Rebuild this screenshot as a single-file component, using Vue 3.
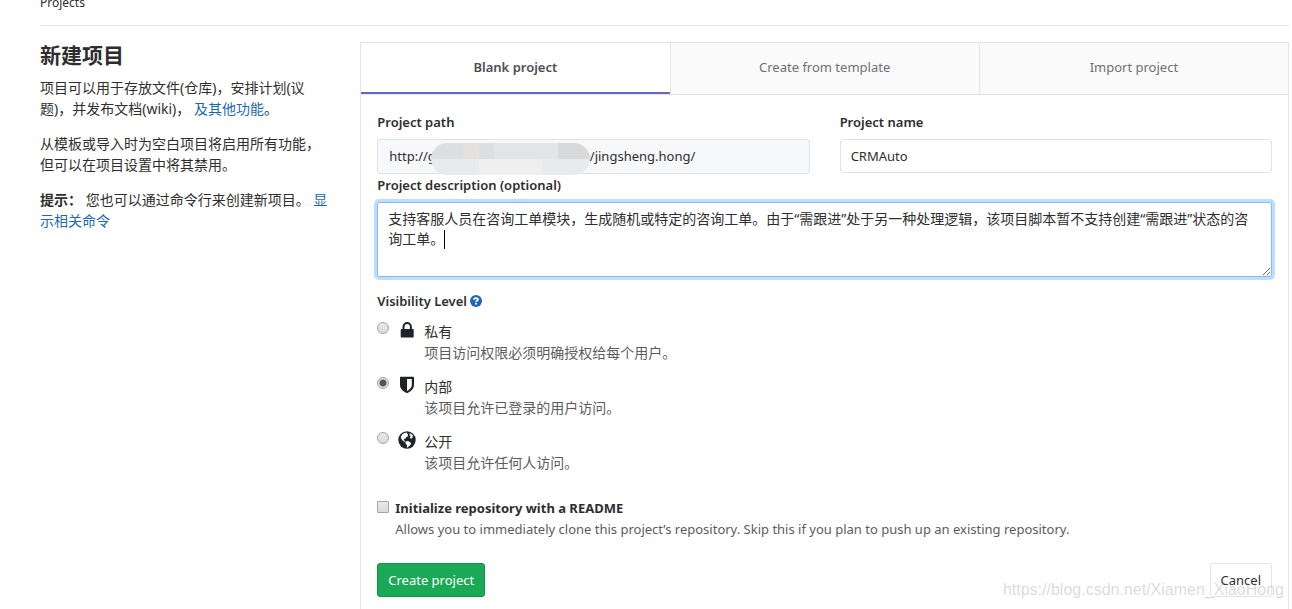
<script setup>
import { ref } from 'vue'

const tabs = ['Blank project', 'Create from template', 'Import project']
const activeTab = ref(0)
const projectName = ref('CRMAuto')
const description = ref(
  '支持客服人员在咨询工单模块，生成随机或特定的咨询工单。由于“需跟进”处于另一种处理逻辑，该项目脚本暂不支持创建“需跟进”状态的咨询工单。'
)
const visibility = ref('internal')
const withReadme = ref(false)
const levels = [
  { id: 'private', name: '私有', note: '项目访问权限必须明确授权给每个用户。' },
  { id: 'internal', name: '内部', note: '该项目允许已登录的用户访问。' },
  { id: 'public', name: '公开', note: '该项目允许任何人访问。' }
]
</script>

<template>
  <div class="page">
    <nav class="crumbs"><a href="#">Projects</a></nav>
    <div class="row">
      <aside class="intro">
        <h1>新建项目</h1>
        <p>项目可以用于存放文件(仓库)，安排计划(议题)，并发布文档(wiki)， <a href="#">及其他功能</a>。</p>
        <p>从模板或导入时为空白项目将启用所有功能，但可以在项目设置中将其禁用。</p>
        <p><strong>提示：</strong> 您也可以通过命令行来创建新项目。 <a href="#">显示相关命令</a></p>
      </aside>

      <main class="panel">
        <div class="tabs" role="tablist">
          <button
            v-for="(tab, i) in tabs"
            :key="tab"
            type="button"
            role="tab"
            class="tab"
            :class="{ active: activeTab === i }"
            :aria-selected="activeTab === i"
            @click="activeTab = i"
          >{{ tab }}</button>
        </div>

        <form class="form" @submit.prevent>
          <div class="pair">
            <div class="field">
              <span class="label">Project path</span>
              <div class="path">
                <span>http://g</span>
                <span class="mask" aria-hidden="true"><i v-for="n in 20" :key="n"></i></span>
                <span>/jingsheng.hong/</span>
              </div>
            </div>
            <div class="field">
              <label class="label" for="name">Project name</label>
              <input id="name" v-model="projectName" class="text" type="text">
            </div>
          </div>

          <label class="label" for="desc">Project description (optional)</label>
          <div class="area">
            <textarea id="desc" v-model="description" rows="3" spellcheck="false"></textarea>
            <span class="caret"></span>
          </div>

          <fieldset class="levels">
            <legend class="label">
              Visibility Level
              <a href="#" class="help" aria-label="Help">
                <svg viewBox="0 0 12 12" width="12" height="12">
                  <circle cx="6" cy="6" r="6" fill="#1b69b6" />
                  <path d="M4 4.7C4 2.6 8 2.5 8 4.6C8 5.7 6.1 5.7 6.1 7" fill="none" stroke="#fff" stroke-width="1.8" />
                  <rect x="5.1" y="7.9" width="1.9" height="1.7" fill="#fff" />
                </svg>
              </a>
            </legend>
            <div v-for="level in levels" :key="level.id" class="level">
              <input :id="level.id" v-model="visibility" class="radio" type="radio" name="visibility" :value="level.id">
              <label :for="level.id">
                <svg v-if="level.id === 'private'" class="icon" viewBox="0 0 18 18" width="18" height="18">
                  <path d="M5.5 9V5.8a3.7 3.7 0 0 1 7.4 0V9" fill="none" stroke="#1f2226" stroke-width="2" />
                  <rect x="2.700" y="8" width="13" height="8.5" rx="1" fill="#1f2226" />
                </svg>
                <svg v-else-if="level.id === 'internal'" class="icon" viewBox="0 0 18 18" width="18" height="18">
                  <path fill-rule="evenodd" d="M2 1.5a.7.7 0 0 1 .7-.7h12.6a.7.7 0 0 1 .7.7V9c0 3.8-3.4 6.5-7 8.3C5.4 15.5 2 12.8 2 9zM9 3v11.9c2.800-1.600 4.800-3.500 4.800-6V3z" fill="#1f2226" />
                </svg>
                <svg v-else class="icon" viewBox="0 0 18 18" width="18" height="18">
                  <circle cx="9" cy="9" r="8.7" fill="#1f2226" />
                  <path d="M4.300 3.300L6.500 1.900L9.200 1.500L8.800 2.800L10.200 3.100L9.600 4.400L10.300 5.200L8.200 6L7.600 7.500L6 8L5.700 9.300L7.600 10.200L7.200 11L5 9.900L3.500 8L2.700 6.200Z" fill="#fff" />
                  <path d="M10.700 1.800L13.400 2.900L15.600 5.200L14.300 5.300L14.700 6.800L12.900 7.700L11.700 6.600L12.700 5L11.400 4.300L12 3Z" fill="#fff" />
                  <path d="M7.900 10.400L10 9.900L13.200 11.900L12.600 13.800L10.900 15.200L9.800 16.600L8.900 16.500L9 14L7.300 12.200Z" fill="#fff" />
                </svg>
                <span class="words">
                  <span class="name">{{ level.name }}</span>
                  <span class="note">{{ level.note }}</span>
                </span>
              </label>
            </div>
          </fieldset>

          <div class="readme">
            <input id="readme" v-model="withReadme" class="check" type="checkbox">
            <label for="readme">
              <strong>Initialize repository with a README</strong>
              <span class="note">Allows you to immediately clone this project’s repository. Skip this if you plan to push up an existing repository.</span>
            </label>
          </div>

          <div class="actions">
            <button type="submit" class="btn create">Create project</button>
            <button type="button" class="btn cancel">Cancel</button>
          </div>
        </form>
      </main>
    </div>
    <div class="watermark">https://blog.csdn.net/Xiamen_XiaoHong</div>
  </div>
</template>

<style>
body { margin: 0; overflow: hidden; background: #fff; }
</style>

<style scoped>
.page, .page * { box-sizing: border-box; }
.page {
  position: relative;
  padding: 0 3px 0 40px;
  color: #2e2e2e;
  font: 13px/21px "Noto Sans", "Noto Sans CJK SC", sans-serif;
}
a { color: #1b69b6; text-decoration: none; }
button, input, textarea { font: inherit; color: inherit; margin: 0; }
.crumbs {
  height: 26px;
  border-bottom: 1px solid #e5e5e5;
  font-size: 12px;
  line-height: 6px;
}
.crumbs a { color: #2e2e2e; }
.row { display: flex; margin: 16px -16px 0; }
.intro { width: 25%; padding: 0 16px; font-size: 14px; }
.panel { flex: 1; min-width: 0; margin: 0 16px; border: 1px solid #e5e5e5; }
.intro h1 { margin: 0 0 9px; font-size: 21px; line-height: 26px; font-weight: 700; }
.intro p { margin: 0 0 14px; }
.tabs { display: flex; }
.tab {
  flex: 1;
  height: 52px;
  padding: 0 0 2px;
  border: 0;
  border-right: 1px solid #e5e5e5;
  border-bottom: 1px solid #e5e5e5;
  background: #fafafa;
  color: #707070;
}
.tab:last-child { border-right: 0; }
.tab.active { background: #fff; color: #4c4e54; font-weight: 600; box-shadow: inset 0 -2px #6666c4; }
.form { padding: 16px; }
.pair { display: flex; gap: 30px; }
.field { flex: 1; min-width: 0; }
.label { display: block; padding: 0; line-height: 22px; font-weight: 600; }
.path, .text { width: 100%; margin-top: 6px; border: 1px solid #e0e2e4; border-radius: 3px; }
.path {
  display: flex;
  height: 35px;
  padding: 0 11px;
  align-items: center;
  background: #f7f8fa;
}
.text { display: block; height: 34px; padding: 0 10px; background: #fff; outline: 0; }
.mask {
  display: grid;
  flex: none;
  grid-template-columns: repeat(10, 1fr);
  width: 159px;
  height: 32px;
  margin: 5px 0 0 -5px;
  overflow: hidden;
  border-radius: 16px;
}
.mask i { background: #e3e4e6; }
.mask i:nth-child(1), .mask i:nth-child(2), .mask i:nth-child(4) { background: #dcdee0; }
.mask i:nth-child(3) { background: #e4e1df; }
.mask i:nth-child(9), .mask i:nth-child(10) { background: #d8d9db; }
.mask i:nth-child(n+11) { background: #e9eaec; }
.mask i:nth-child(n+14):nth-child(-n+17) { background: #efeff0; }
.area { position: relative; margin-top: 6px; }
textarea {
  display: block;
  width: 100%;
  height: 75px;
  padding: 6px 10px;
  border: 1px solid #80bdff;
  border-radius: 2px;
  outline: 0;
  box-shadow: 0 0 0 3px #bfdeff;
  background: #fff;
  font-size: 14px;
  line-height: 20px;
  resize: vertical;
}
.caret { position: absolute; left: 67px; top: 28px; width: 1px; height: 19px; background: #000; }
.levels { margin: 13px 0 0; padding: 0; border: 0; }
.help svg { display: inline-block; vertical-align: -1px; }
.level { display: flex; height: 55px; padding-top: 9px; }
.level label { display: flex; font-size: 14px; }
.radio, .check {
  appearance: none;
  flex: none;
  width: 12px;
  height: 12px;
  border: 1px solid #a5a5a5;
  background: linear-gradient(#e9e9e9, #dadada);
}
.radio { margin-top: 1px; border-radius: 50%; }
.radio:checked { background: radial-gradient(circle, #555 0 3px, #e2e2e2 4px); }
.icon { flex: none; margin: 0 8px 0 9px; }
.words { display: block; }
.name, .note { display: block; }
.note { color: #5c5c5c; }
.readme { display: flex; margin-top: 19px; }
.check { margin-top: 5px; border-radius: 1px; }
.readme label { margin: 2px 0 0 6px; }
.readme strong { display: block; }
.actions { display: flex; justify-content: space-between; margin-top: 23px; }
.btn { height: 34px; padding: 0 10px; border-radius: 3px; border: 1px solid #e5e5e5; background: #fff; }
.create { border-color: #168f48; background: #1aaa55; color: #fff; }
.watermark {
  position: absolute;
  right: 8px;
  bottom: 14px;
  color: rgba(150, 150, 150, .35);
  font: 16px/20px "Liberation Sans", sans-serif;
  pointer-events: none;
}
</style>
